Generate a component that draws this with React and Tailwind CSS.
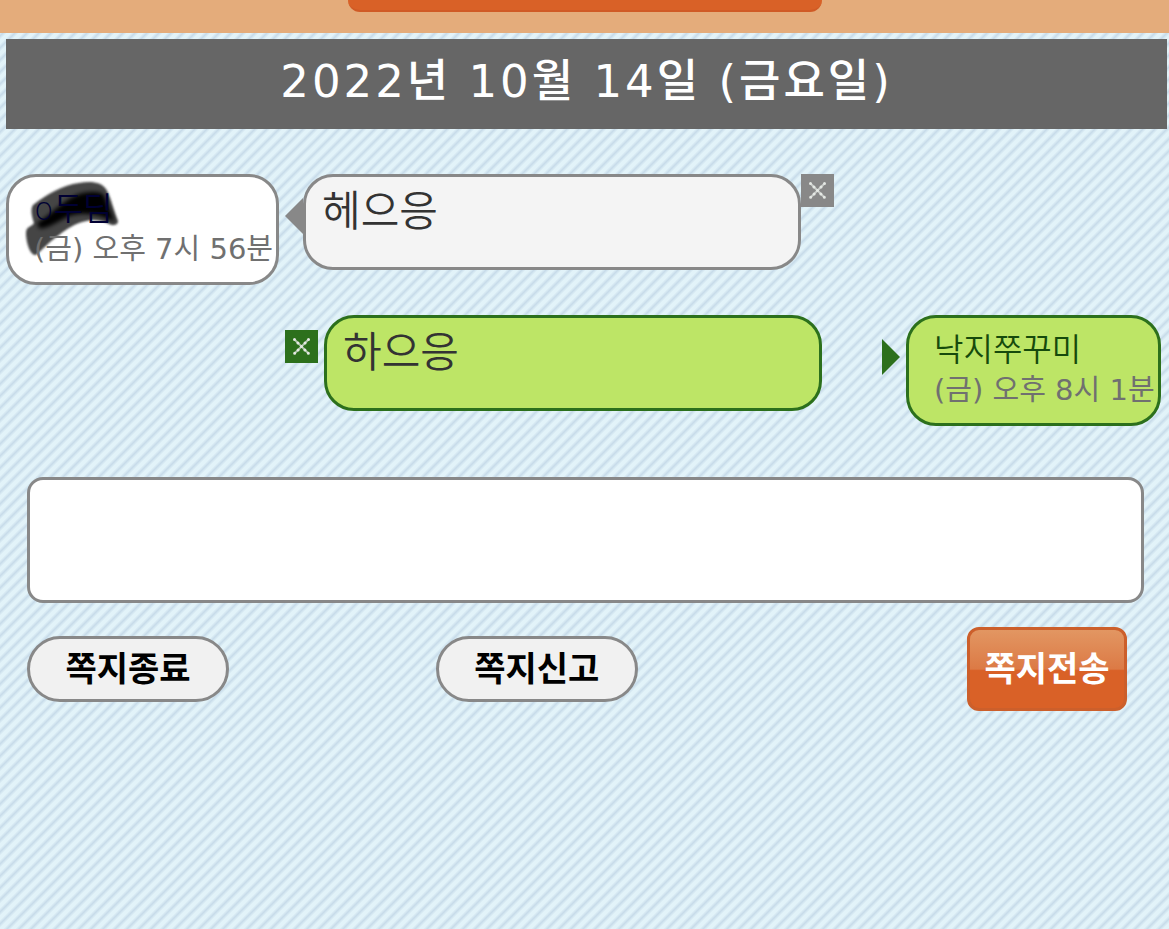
const stripes =
  'bg-[#e0f2f8] bg-[linear-gradient(135deg,#c8dcea_0%,#e2f3f9_17%,#e2f3f9_33%,#c8dcea_50%,#e2f3f9_67%,#e2f3f9_83%,#c8dcea_100%)] bg-[length:12px_12px]';

const DeleteButton = ({ className }) => (
  <button
    type="button"
    aria-label="삭제"
    className={`flex size-[33px] shrink-0 items-center justify-center ${className}`}
  >
    <svg width="19" height="19" viewBox="0 0 19 19" stroke="#e4e8e4">
      <path d="M3 3 16 16M16 3 3 16" strokeWidth="2" opacity="0.7" />
      <path
        d="M2.5 2.5 17 17M16.5 2.5 2 17"
        strokeWidth="3"
        strokeLinecap="round"
        strokeDasharray="0 4.9"
      />
    </svg>
  </button>
);

const Scribble = () => (
  <svg
    className="absolute top-[3px] left-[14px]"
    width="102"
    height="80"
    viewBox="0 0 102 80"
    aria-hidden="true"
  >
    <defs>
      <filter id="soft" x="-10%" y="-10%" width="120%" height="120%">
        <feGaussianBlur stdDeviation="1" />
      </filter>
      <filter id="softer" x="-20%" y="-20%" width="140%" height="140%">
        <feGaussianBlur stdDeviation="2" />
      </filter>
    </defs>
    <path
      d="M10 25C24 14 40 5 56 3 68 1 78 2 83 9 88 17 91 32 95 41 95 46 89 46 84 43 66 36 50 44 36 55 26 62 18 71 13 75 7 76 3 62 3 53 3 46 9 47 11 43 9 37 7 29 10 25Z"
      fill="#444"
      filter="url(#soft)"
    />
    <path
      d="M14 43C30 34 42 17 60 13 72 11 78 12 81 15L92 42C74 33 56 31 42 38 32 43 22 50 16 48Z"
      fill="#050506"
      filter="url(#softer)"
    />
  </svg>
);

const App = () => {
  return (
    <div
      className={`min-h-screen overflow-hidden font-['DejaVu_Sans','Noto_Sans_CJK_KR',sans-serif] ${stripes}`}
    >
      <header className="flex h-[33px] justify-center bg-[#e4ac7b]">
        <div className="h-3 w-[474px] rounded-b-xl border-b-2 border-[#d05a25] bg-[#d96127]" />
      </header>

      <h1 className="mt-1.5 mr-0.5 ml-1.5 h-[90px] bg-[#666] text-center text-[45px] leading-[86px] font-medium tracking-[3px] text-white">
        2022년 10월 14일 (금요일)
      </h1>

      <main>
        <section className="mt-[45px] flex items-start pl-1.5">
          <div className="relative h-[111px] w-[273px] shrink-0 rounded-[30px] border-3 border-[#888] bg-white pt-3 pl-[25px] whitespace-nowrap">
            <Scribble />
            <p className="relative text-[32px] leading-[40px] font-[350] text-[#000033]">
              o두딤
            </p>
            <p className="relative text-[29px] leading-[40px] text-[#707070]">
              (금) 오후 7시 56분
            </p>
          </div>
          <svg className="mt-6 ml-1.5" width="18" height="36">
            <path d="M18 0V36L0 18Z" fill="#888" />
          </svg>
          <p className="h-24 w-[498px] rounded-[30px] border-3 border-[#888] bg-[#f4f4f4] pt-2 pl-4 text-[42px] leading-[54px] font-[350] text-[#333]">
            헤으응
          </p>
          <DeleteButton className="bg-[#888]" />
        </section>

        <section className="mt-[30px] flex items-start justify-end pr-2">
          <DeleteButton className="mt-[15px] mr-1.5 bg-[#2c701c]" />
          <p className="h-24 w-[498px] rounded-[30px] border-3 border-[#2c701c] bg-[#bde566] pt-2 pl-4 text-[42px] leading-[54px] font-[350] text-[#333]">
            하으응
          </p>
          <svg className="mt-6 mr-1.5 ml-[60px]" width="18" height="36">
            <path d="M0 0V36L18 18Z" fill="#2c701c" />
          </svg>
          <div className="h-[111px] w-[255px] shrink-0 rounded-[30px] border-3 border-[#2c701c] bg-[#bde566] pt-3 pl-[25px] whitespace-nowrap">
            <p className="text-[32px] leading-[40px] font-[350] text-[#164a0c]">
              낙지쭈꾸미
            </p>
            <p className="text-[29px] leading-[40px] text-[#707070]">
              (금) 오후 8시 1분
            </p>
          </div>
        </section>

        <form className="mt-[51px] pr-[25px] pl-[27px]">
          <textarea
            aria-label="쪽지 내용"
            className="block h-[126px] w-full resize-none rounded-2xl border-3 border-[#888] bg-white p-3 text-[32px]"
          />
          <div className="mt-6 flex items-center pr-[17px] text-[34px] font-bold">
            <button
              type="button"
              className="h-[66px] w-[202px] rounded-full border-3 border-[#888] bg-[#f1f1f1] leading-[56px] text-black"
            >
              쪽지종료
            </button>
            <button
              type="button"
              className="mr-auto ml-[18.8%] h-[66px] w-[202px] rounded-full border-3 border-[#888] bg-[#f1f1f1] leading-[56px] text-black"
            >
              쪽지신고
            </button>
            <button
              type="submit"
              className="h-[84px] w-40 rounded-xl border-3 border-[#cc5f2b] bg-linear-to-b from-[#e29662] from-0% via-[#dc7a45] via-50% to-[#d96127] to-52% text-white"
            >
              쪽지전송
            </button>
          </div>
        </form>
      </main>
    </div>
  );
};

export default App;
